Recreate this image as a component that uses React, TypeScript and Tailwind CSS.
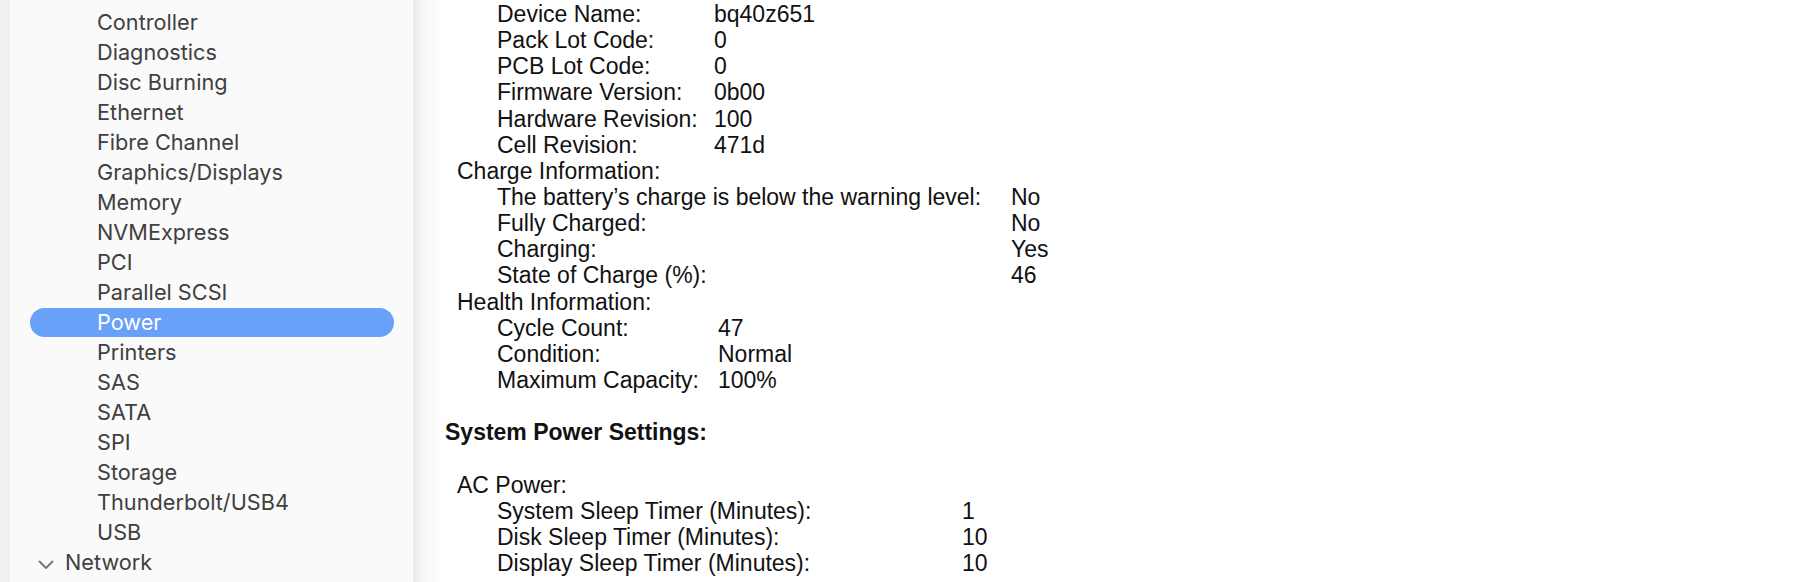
import React from "react";

const sidebarItems = [
  "Card Reader",
  "Controller",
  "Diagnostics",
  "Disc Burning",
  "Ethernet",
  "Fibre Channel",
  "Graphics/Displays",
  "Memory",
  "NVMExpress",
  "PCI",
  "Parallel SCSI",
  "Power",
  "Printers",
  "SAS",
  "SATA",
  "SPI",
  "Storage",
  "Thunderbolt/USB4",
  "USB",
];

type KV = [string, string];

const groupA: KV[] = [
  ["Device Name:", "bq40z651"],
  ["Pack Lot Code:", "0"],
  ["PCB Lot Code:", "0"],
  ["Firmware Version:", "0b00"],
  ["Hardware Revision:", "100"],
  ["Cell Revision:", "471d"],
];
const groupB: KV[] = [
  ["The battery\u2019s charge is below the warning level:", "No"],
  ["Fully Charged:", "No"],
  ["Charging:", "Yes"],
  ["State of Charge (%):", "46"],
];
const groupC: KV[] = [
  ["Cycle Count:", "47"],
  ["Condition:", "Normal"],
  ["Maximum Capacity:", "100%"],
];
const groupD: KV[] = [
  ["System Sleep Timer (Minutes):", "1"],
  ["Disk Sleep Timer (Minutes):", "10"],
  ["Display Sleep Timer (Minutes):", "10"],
  ["Sleep on Power Button:", "Yes"],
];

function Group({ items, col }: { items: KV[]; col: string }) {
  return (
    <div className={`grid pl-[52px] ${col}`}>
      {items.map(([k, v], i) => {
        const last = items === groupD && i === items.length - 1;
        const cls = `h-[26.15px] leading-[26px] whitespace-nowrap ${last ? "pt-[5px]" : ""}`;
        return (
          <React.Fragment key={k}>
            <div className={cls}>{k}</div>
            <div className={cls}>{v}</div>
          </React.Fragment>
        );
      })}
    </div>
  );
}

export default function App() {
  return (
    <div className="flex h-[582px] w-[1802px] overflow-hidden bg-[#f1f1f1]">
      <div className="w-[10px] shrink-0 bg-[#f0f0f0]" />
      <div
        className="w-[403px] shrink-0 bg-[#fafafa] border-r border-[#ffffff] text-[#404040]"
        style={{ fontFamily: "Inter, 'Noto Sans', sans-serif" }}
      >
        <div className="mt-[-23px] flex flex-col">
          {sidebarItems.map((it) => {
            const sel = it === "Power";
            return (
              <div key={it} className="h-[30px] flex items-center pl-[20px] pr-[18px]">
                <div
                  className={`h-[29px] w-full rounded-full flex items-center pl-[67px] text-[21.7px] ${
                    sel ? "bg-[#69a0f8] text-white" : ""
                  }`}
                >
                  {it}
                </div>
              </div>
            );
          })}
          <div className="h-[30px] flex items-center pl-[20px] pr-[18px]">
            <div className="h-[29px] w-full flex items-center pl-[8px] text-[21.7px]">
              <svg width="16" height="10" viewBox="0 0 16 10" className="mr-[11px] mt-[6px]">
                <path d="M1.5 1.5 L8 8 L14.5 1.5" fill="none" stroke="#7a7a7a" strokeWidth="2" strokeLinecap="round" strokeLinejoin="round" />
              </svg>
              Network
            </div>
          </div>
        </div>
      </div>
      <div
        className="flex-1 bg-[linear-gradient(90deg,#ebebeb_0px,#f7f7f7_10px,#ffffff_30px)] text-[#111111] text-[23px] pl-[32px] pt-[1px]"
        style={{ fontFamily: "'Liberation Sans', Arial, sans-serif" }}
      >
        <Group items={groupA} col="grid-cols-[217px_auto]" />
        <div className="h-[26.15px] leading-[26px] pl-[12px]">Charge Information:</div>
        <Group items={groupB} col="grid-cols-[514px_auto]" />
        <div className="h-[26.15px] leading-[26px] pl-[12px]">Health Information:</div>
        <Group items={groupC} col="grid-cols-[221px_auto]" />
        <div className="h-[26.15px]" />
        <div className="h-[26.15px] leading-[26px] font-bold">System Power Settings:</div>
        <div className="h-[26.15px]" />
        <div className="h-[26.15px] leading-[26px] pl-[12px]">AC Power:</div>
        <Group items={groupD} col="grid-cols-[465px_auto]" />
      </div>
    </div>
  );
}
